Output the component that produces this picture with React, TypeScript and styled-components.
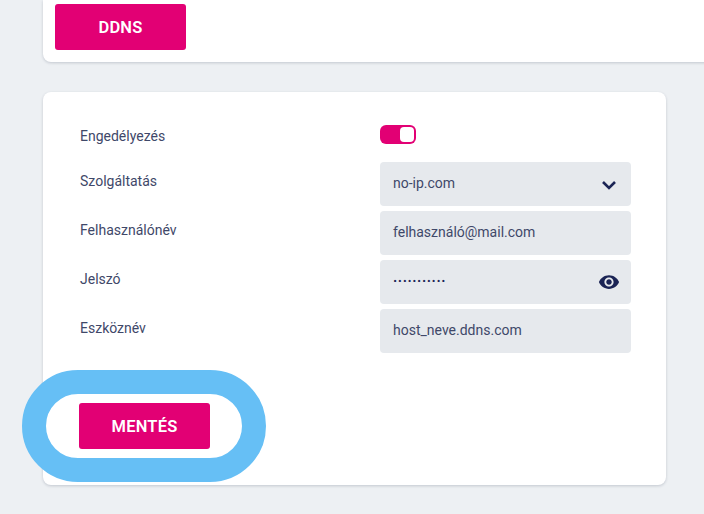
import React from 'react';
import styled, { createGlobalStyle } from 'styled-components';

const GlobalStyle = createGlobalStyle`
  html, body {
    margin: 0;
    padding: 0;
    background: #edf0f3;
  }
  * {
    box-sizing: border-box;
  }
`;

const Page = styled.div`
  width: 704px;
  height: 514px;
  overflow: hidden;
  padding-left: 43px;
  font-family: Roboto, "Liberation Sans", sans-serif;
  color: #3f4869;
`;

const TopCard = styled.section`
  width: 700px;
  padding: 4px 12px 12px;
  background: #fff;
  border-radius: 0 0 8px 8px;
  box-shadow: 0 1px 3px rgba(30, 40, 70, 0.2);
`;

const FormCard = styled.section`
  width: 623px;
  margin-top: 30px;
  padding: 33px 36px 36px;
  background: #fff;
  border-radius: 8px;
  box-shadow: 0 1px 3px rgba(30, 40, 70, 0.2);
`;

const Rows = styled.div`
  display: flex;
  flex-direction: column;
  gap: 5px;
`;

const Row = styled.div<{ $toggle?: boolean }>`
  display: grid;
  grid-template-columns: 301px 251px;
  align-items: start;
  height: ${({ $toggle }) => ($toggle ? '32px' : '44px')};
`;

const Label = styled.div<{ $toggle?: boolean }>`
  padding: ${({ $toggle }) => ($toggle ? '1px' : '9px')} 0 0 1px;
  font-size: 14px;
  line-height: 20px;
`;

const Field = styled.div`
  display: flex;
  align-items: center;
  justify-content: space-between;
  height: 44px;
  padding: 0 11px 2px 13px;
  background: #e6e9ed;
  border-radius: 4px;
  font-size: 14px;
  line-height: 20px;
`;

const Dots = styled.span`
  font-size: 14px;
  font-weight: 700;
  letter-spacing: 0.6px;
  color: #1b2455;
`;

const Toggle = styled.div`
  display: flex;
  justify-content: flex-end;
  align-items: center;
  width: 36px;
  height: 19px;
  padding-right: 2px;
  background: #e20074;
  border-radius: 6px;
`;

const Knob = styled.div`
  width: 14px;
  height: 15px;
  background: #fff;
  border-radius: 4px;
`;

const Button = styled.button`
  display: block;
  width: 131px;
  height: 46px;
  padding: 1px 0 0;
  border: 0;
  border-radius: 3px;
  background: #e20074;
  color: #fff;
  font-family: inherit;
  font-size: 16.5px;
  font-weight: 600;
  letter-spacing: 0.2px;
`;

const SaveWrap = styled.div`
  position: relative;
  width: 131px;
  margin-top: 50px;
`;

const Highlight = styled.div`
  position: absolute;
  left: -57px;
  top: -33px;
  width: 244px;
  height: 112px;
  border: 24px solid #66bff5;
  border-radius: 56px;
  pointer-events: none;
`;

const ChevronSvg = styled.svg`
  margin: 4px 3px 0 0;
`;

const EyeSvg = styled.svg`
  margin-top: 2px;
`;

const Chevron = () => (
  <ChevronSvg width="16" height="10" viewBox="0 0 16 10" fill="none">
    <path d="M2 2l6 6 6-6" stroke="#1b2455" strokeWidth="2.6" />
  </ChevronSvg>
);

const Eye = () => (
  <EyeSvg width="22" height="22" viewBox="0 0 24 24" fill="#1b2455">
    <path d="M12 4.5C7 4.5 2.73 7.61 1 12c1.73 4.39 6 7.5 11 7.5s9.27-3.11 11-7.5c-1.73-4.39-6-7.5-11-7.5zM12 17c-2.76 0-5-2.24-5-5s2.24-5 5-5 5 2.24 5 5-2.24 5-5 5zm0-8c-1.66 0-3 1.34-3 3s1.34 3 3 3 3-1.34 3-3-1.34-3-3-3z" />
  </EyeSvg>
);

const App: React.FC = () => (
  <Page>
    <GlobalStyle />
    <TopCard>
      <Button>DDNS</Button>
    </TopCard>
    <FormCard>
      <Rows>
        <Row $toggle>
          <Label $toggle>Engedélyezés</Label>
          <Toggle>
            <Knob />
          </Toggle>
        </Row>
        <Row>
          <Label>Szolgáltatás</Label>
          <Field>
            no-ip.com
            <Chevron />
          </Field>
        </Row>
        <Row>
          <Label>Felhasználónév</Label>
          <Field>felhasználó@mail.com</Field>
        </Row>
        <Row>
          <Label>Jelszó</Label>
          <Field>
            <Dots>···········</Dots>
            <Eye />
          </Field>
        </Row>
        <Row>
          <Label>Eszköznév</Label>
          <Field>host_neve.ddns.com</Field>
        </Row>
      </Rows>
      <SaveWrap>
        <Button>MENTÉS</Button>
        <Highlight />
      </SaveWrap>
    </FormCard>
  </Page>
);

export default App;
